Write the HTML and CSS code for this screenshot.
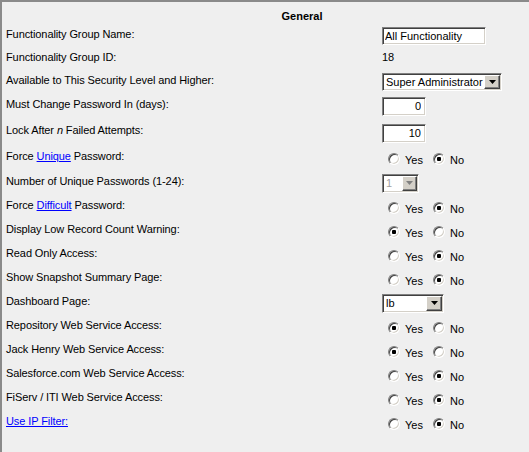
FILE: index.html
```html
<!DOCTYPE html>
<html>
<head>
<meta charset="utf-8">
<link rel="stylesheet" href="styles.css">
</head>
<body>
<div class="panel">
  <div class="title">General</div>

  <div class="row h22">
    <div class="label">Functionality Group Name:</div>
    <div class="value"><input class="field text" value="All Functionality"></div>
  </div>

  <div class="row">
    <div class="label">Functionality Group ID:</div>
    <div class="value plain">18</div>
  </div>

  <div class="row h22">
    <div class="label">Available to This Security Level and Higher:</div>
    <div class="value">
      <span class="select w-admin"><span class="sel-text">Super Administrator</span><span class="sel-btn"><svg width="7" height="4" viewBox="0 0 7 4"><polygon points="0,0 7,0 3.5,4"/></svg></span></span>
    </div>
  </div>

  <div class="row h26">
    <div class="label">Must Change Password In (days):</div>
    <div class="value"><input class="field num" value="0"></div>
  </div>

  <div class="row h26">
    <div class="label">Lock After <i>n</i> Failed Attempts:</div>
    <div class="value low"><input class="field num" value="10"></div>
  </div>

  <div class="row h26">
    <div class="label">Force <a href="#">Unique</a> Password:</div>
    <div class="value radios"><span class="radio"></span><span class="opt">Yes</span><span class="radio on"></span><span class="opt">No</span></div>
  </div>

  <div class="row">
    <div class="label">Number of Unique Passwords (1-24):</div>
    <div class="value">
      <span class="select w-num disabled"><span class="sel-text">1</span><span class="sel-btn"><svg width="7" height="4" viewBox="0 0 7 4"><polygon points="0,0 7,0 3.5,4"/></svg></span></span>
    </div>
  </div>

  <div class="row">
    <div class="label">Force <a href="#">Difficult</a> Password:</div>
    <div class="value radios"><span class="radio"></span><span class="opt">Yes</span><span class="radio on"></span><span class="opt">No</span></div>
  </div>

  <div class="row">
    <div class="label">Display Low Record Count Warning:</div>
    <div class="value radios"><span class="radio on"></span><span class="opt">Yes</span><span class="radio"></span><span class="opt">No</span></div>
  </div>

  <div class="row">
    <div class="label">Read Only Access:</div>
    <div class="value radios"><span class="radio"></span><span class="opt">Yes</span><span class="radio on"></span><span class="opt">No</span></div>
  </div>

  <div class="row">
    <div class="label">Show Snapshot Summary Page:</div>
    <div class="value radios"><span class="radio"></span><span class="opt">Yes</span><span class="radio on"></span><span class="opt">No</span></div>
  </div>

  <div class="row">
    <div class="label">Dashboard Page:</div>
    <div class="value">
      <span class="select w-lb"><span class="sel-text">lb</span><span class="sel-btn"><svg width="7" height="4" viewBox="0 0 7 4"><polygon points="0,0 7,0 3.5,4"/></svg></span></span>
    </div>
  </div>

  <div class="row">
    <div class="label">Repository Web Service Access:</div>
    <div class="value radios"><span class="radio on"></span><span class="opt">Yes</span><span class="radio"></span><span class="opt">No</span></div>
  </div>

  <div class="row">
    <div class="label">Jack Henry Web Service Access:</div>
    <div class="value radios"><span class="radio on"></span><span class="opt">Yes</span><span class="radio"></span><span class="opt">No</span></div>
  </div>

  <div class="row">
    <div class="label">Salesforce.com Web Service Access:</div>
    <div class="value radios"><span class="radio"></span><span class="opt">Yes</span><span class="radio on"></span><span class="opt">No</span></div>
  </div>

  <div class="row">
    <div class="label">FiServ / ITI Web Service Access:</div>
    <div class="value radios"><span class="radio"></span><span class="opt">Yes</span><span class="radio on"></span><span class="opt">No</span></div>
  </div>

  <div class="row">
    <div class="label"><a href="#">Use IP Filter:</a></div>
    <div class="value radios"><span class="radio"></span><span class="opt">Yes</span><span class="radio on"></span><span class="opt">No</span></div>
  </div>
</div>
</body>
</html>
```

FILE: styles.css
```css
html, body {
  margin: 0;
  padding: 0;
  background: #efefef;
  overflow: hidden;
}

body {
  font-family: "Liberation Sans", Arial, sans-serif;
  font-size: 11px;
  line-height: 13px;
  color: #000;
}

.panel {
  min-height: 450px;
  border-top: 2px solid #8a8a8a;
  border-left: 2px solid #8a8a8a;
}

.title {
  font-weight: bold;
  text-align: center;
  padding-top: 8px;
  padding-left: 73px;
}

.row {
  display: flex;
  align-items: center;
  height: 24px;
}

.row.h22 { height: 22px; }
.row.h26 { height: 26px; }

.label {
  flex: none;
  width: 376px;
  padding-left: 4px;
  letter-spacing: -0.1px;
}

.label a,
.label a:visited {
  color: #0000ff;
  text-decoration: underline;
}

.value {
  display: flex;
  align-items: center;
  margin-top: 4px;
}

.value.plain { margin-top: 0; }
.value.low { margin-top: 6px; }

.value.radios {
  margin-top: 8px;
  padding-left: 6px;
}

/* sunken text fields */
.field {
  box-sizing: border-box;
  height: 18px;
  margin: 0;
  padding: 0 1px 0 2px;
  font: inherit;
  color: #000;
  background: #fff;
  border: 1px solid;
  border-color: #808080 #ffffff #ffffff #808080;
  box-shadow: inset 1px 1px 0 #404040, inset -1px -1px 0 #d4d0c8;
  outline: none;
}

.field.text { width: 104px; }

.field.num {
  width: 44px;
  height: 19px;
  text-align: right;
  padding-right: 4px;
}

/* classic drop-down */
.select {
  box-sizing: border-box;
  display: inline-flex;
  align-items: center;
  height: 19px;
  padding: 1px 1px 1px 3px;
  background: #fff;
  border: 1px solid;
  border-color: #808080 #ffffff #ffffff #808080;
  box-shadow: inset 1px 1px 0 #404040, inset -1px -1px 0 #d4d0c8;
}

.select.w-admin { width: 120px; height: 18px; }
.select.w-num { width: 37px; }
.select.w-lb { width: 62px; }

.sel-text {
  flex: 1;
  white-space: nowrap;
  overflow: hidden;
}

.sel-btn {
  flex: none;
  align-self: stretch;
  box-sizing: border-box;
  width: 16px;
  display: flex;
  align-items: center;
  justify-content: center;
  background: #d4d0c8;
  border: 1px solid;
  border-color: #ffffff #404040 #404040 #ffffff;
  box-shadow: inset -1px -1px 0 #808080;
}

.sel-btn svg { fill: #000; display: block; }

.select.disabled .sel-text { color: #a0a0a0; }
.select.disabled .sel-btn { width: 15px; }
.select.disabled .sel-btn svg { fill: #808080; }

/* classic radio buttons */
.radio {
  position: relative;
  flex: none;
  box-sizing: border-box;
  width: 12px;
  height: 12px;
  margin-bottom: 3px;
  border-radius: 50%;
  background: #fff;
  border: 1px solid;
  border-color: #808080 #ffffff #ffffff #808080;
  box-shadow: inset 1px 1px 0 #404040, inset -1px -1px 0 #d4d0c8;
}

.radio.on::after {
  content: "";
  position: absolute;
  left: 3px;
  top: 3px;
  width: 4px;
  height: 4px;
  border-radius: 1px;
  background: #000;
}

.opt { margin-left: 5px; }
.opt + .radio { margin-left: 10px; }
```
